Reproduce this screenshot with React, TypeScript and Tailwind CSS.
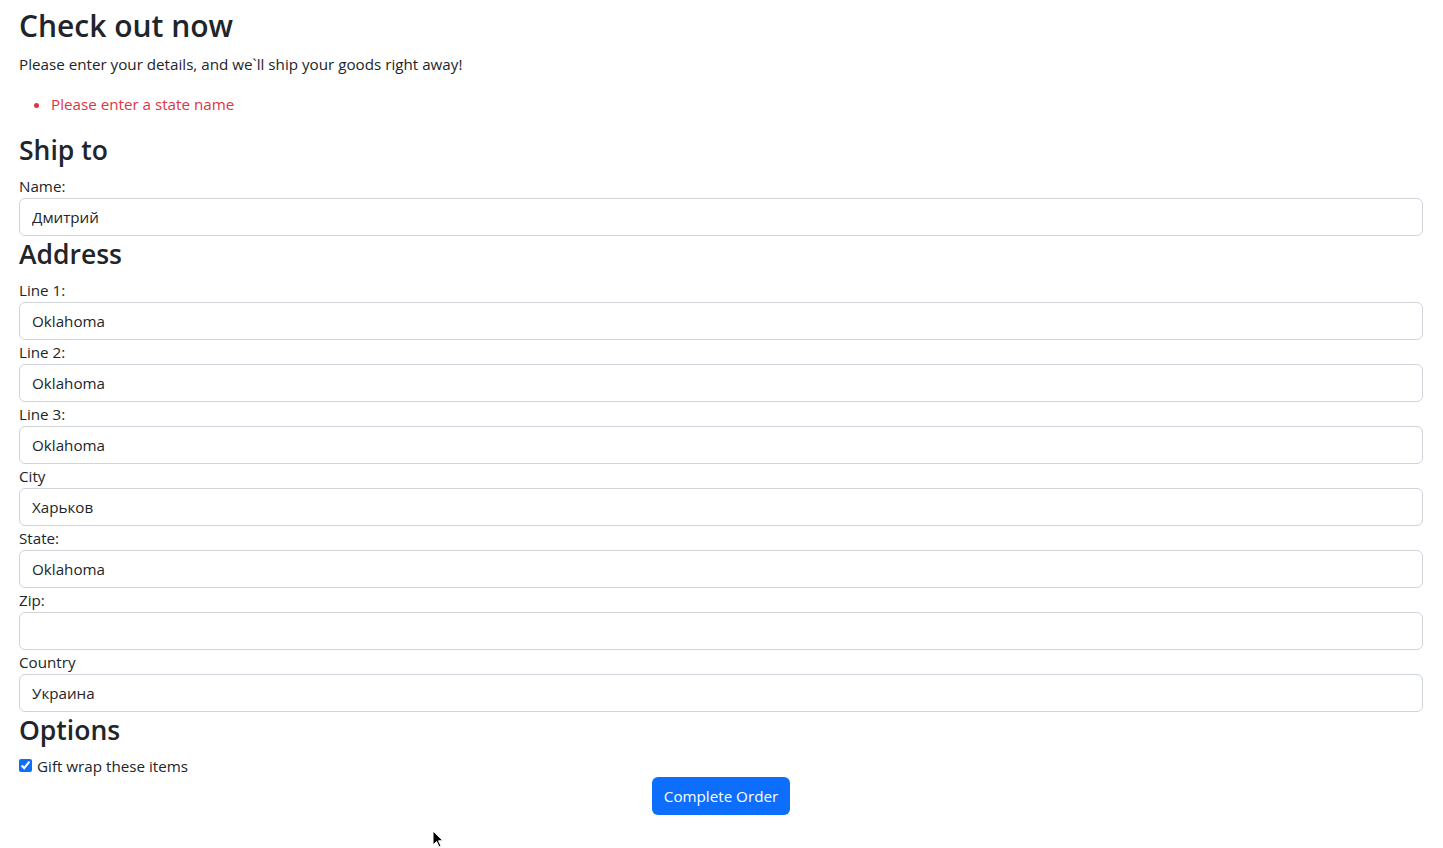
import { useState } from "react";

const font = { fontFamily: '"Open Sans", "Noto Sans", sans-serif' };

function Field({ label, value }: { label: string; value: string }) {
  const [v, setV] = useState(value);
  return (
    <div>
      <label className="block text-[15.2px] leading-[24px]">{label}</label>
      <input
        value={v}
        onChange={(e) => setV(e.target.value)}
        className="block h-[38px] w-full rounded-[6px] border border-[#ced4da] bg-white px-3 text-[15.2px] text-[#212529] outline-none"
      />
    </div>
  );
}

function Heading({ children }: { children: string }) {
  return <h3 className="mb-2 pt-[2px] text-[26.5px] font-semibold leading-[32px]">{children}</h3>;
}

export default function App() {
  const [gift, setGift] = useState(true);

  return (
    <div className="relative min-h-[848px] bg-white pl-[19px] pr-[20px] text-[#212529]" style={font}>
      <h1 className="pt-[8px] text-[30px] font-semibold leading-[36px]">Check out now</h1>
      <p className="mt-2 mb-4 text-[15.2px] leading-[24px]">
        Please enter your details, and we`ll ship your goods right away!
      </p>
      <ul className="mb-4 list-disc pl-8 text-[15.2px] leading-[24px] text-[#dc3545] marker:text-[#dc3545]">
        <li>Please enter a state name</li>
      </ul>

      <Heading>Ship to</Heading>
      <Field label="Name:" value="Дмитрий" />

      <Heading>Address</Heading>
      <Field label="Line 1:" value="Oklahoma" />
      <Field label="Line 2:" value="Oklahoma" />
      <Field label="Line 3:" value="Oklahoma" />
      <Field label="City" value="Харьков" />
      <Field label="State:" value="Oklahoma" />
      <Field label="Zip:" value="" />
      <Field label="Country" value="Украина" />

      <Heading>Options</Heading>
      <label className="flex h-[23px] items-center gap-[5px] text-[15.2px] leading-[24px]">
        <input
          type="checkbox"
          checked={gift}
          onChange={(e) => setGift(e.target.checked)}
          className="h-[13px] w-[13px] accent-[#0d6efd]"
        />
        Gift wrap these items
      </label>

      <div className="flex justify-center">
        <button className="h-[38px] rounded-[6px] bg-[#0d6efd] px-3 text-[15.2px] text-white">
          Complete Order
        </button>
      </div>

      <svg className="absolute left-[432px] top-[830px]" width="12" height="19" viewBox="0 0 12 19">
        <path d="M1 1 L1 15 L4.5 11.5 L7 17 L9 16 L6.5 10.8 L11 10.8 Z" fill="#000" stroke="#fff" strokeWidth="1" />
      </svg>
    </div>
  );
}
